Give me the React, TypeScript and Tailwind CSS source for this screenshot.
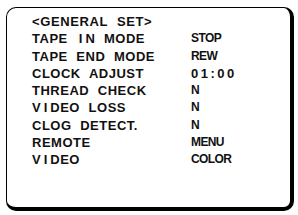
const rows: [string, string][] = [
  ['TAPE IN MODE', 'STOP'],
  ['TAPE END MODE', 'REW'],
  ['CLOCK ADJUST', '01:00'],
  ['THREAD CHECK', 'N'],
  ['VIDEO LOSS', 'N'],
  ['CLOG DETECT.', 'N'],
  ['REMOTE', 'MENU'],
  ['VIDEO', 'COLOR'],
]

// OSD font: the "I" sits in a wide cell
function OsdText({ text }: { text: string }) {
  return (
    <>
      {text.split('').map((ch, i) =>
        ch === 'I' ? (
          <span key={i} className="px-[2.5px]">
            I
          </span>
        ) : (
          ch
        )
      )}
    </>
  )
}

export default function App() {
  return (
    <div className="w-[298px] h-[215px] bg-white pt-[7px] pl-[6px]">
      <div
        className="w-[288px] h-[204px] rounded-[10px] border-black border-t border-l border-r-4 border-b-4 pt-[5px] pl-[25px] text-[#111] font-bold"
        style={{ fontFamily: '"Liberation Sans", Arial, sans-serif' }}
      >
        <div className="text-[13px] leading-[17.25px] tracking-[0.6px] [word-spacing:5px]">
          &lt;GENERAL SET&gt;
        </div>
        {rows.map(([label, value]) => (
          <div key={label} className="flex leading-[17.25px]">
            <div className="w-[159px] whitespace-nowrap text-[13px] tracking-[0.5px] [word-spacing:4.5px]">
              <OsdText text={label} />
            </div>
            <div
              className={
                value === '01:00'
                  ? 'text-[13px] tracking-[2.5px]'
                  : 'text-[12px] tracking-[-0.6px]'
              }
            >
              {value}
            </div>
          </div>
        ))}
      </div>
    </div>
  )
}
